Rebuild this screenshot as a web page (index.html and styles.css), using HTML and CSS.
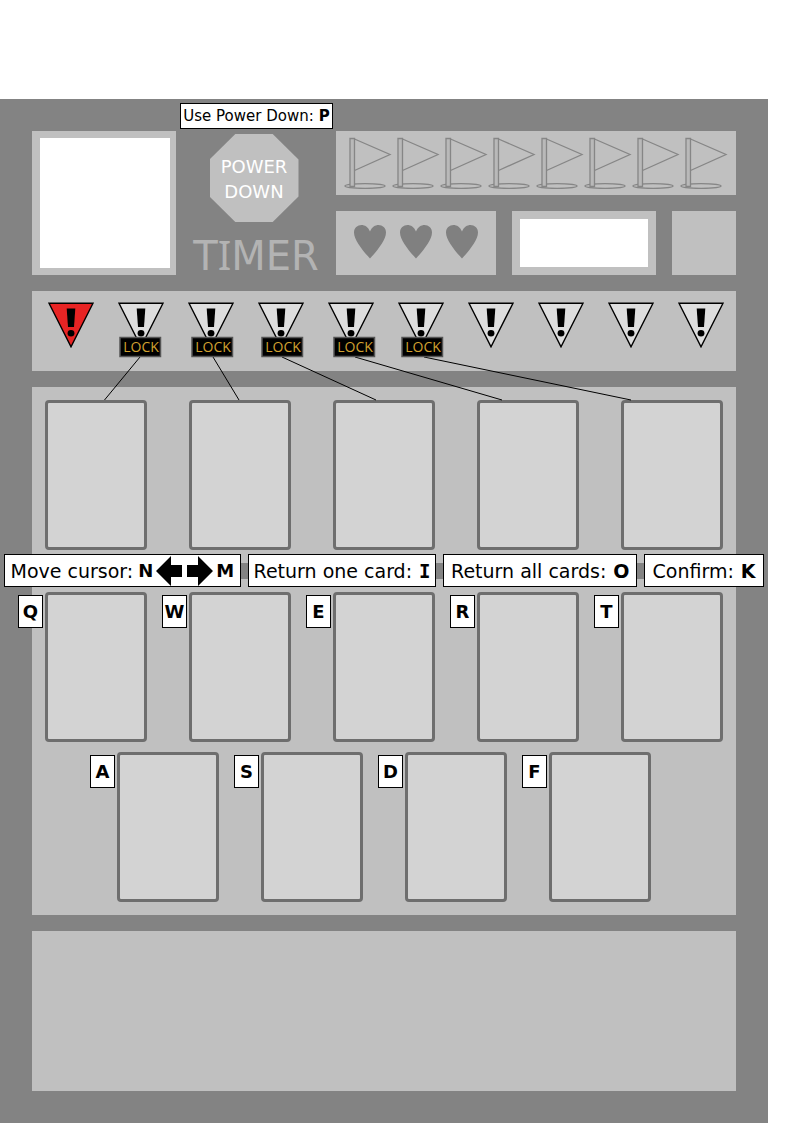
FILE: index.html
```html
<!DOCTYPE html>
<html lang="en">
<head>
<meta charset="utf-8">
<meta name="viewport" content="width=device-width, initial-scale=1">
<title>Program board</title>
<link rel="stylesheet" href="styles.css">
</head>
<body>
<svg class="defs" width="0" height="0" aria-hidden="true">
  <symbol id="flag" viewBox="0 0 48 56">
    <ellipse cx="21" cy="51" rx="20" ry="2.4"/>
    <path class="solid" d="M6 3.500H10.500V51.500H6Z"/>
    <path d="M10.500 4L46 19.500L10.500 35.500"/>
  </symbol>
  <symbol id="heart" viewBox="0 0 32 34">
    <path d="M16 33.500C9 26 0 15 0 7.500C0 -1 12 -3.500 16 6.500C20 -3.500 32 -1 32 7.500C32 15 23 26 16 33.500Z"/>
  </symbol>
  <symbol id="warn" viewBox="0 0 46 46">
    <path class="tri" d="M1 1.200H45L23 44.800Z"/>
    <path d="M18.700 6.500H27.300L26 25H20Z"/>
    <ellipse cx="23" cy="31.200" rx="3.400" ry="3.200"/>
  </symbol>
</svg>
<main class="board">
  <header class="top">
    <div class="panel portrait"><div class="blank"></div></div>
    <div class="power">
      <button class="tag power-tag">Use Power Down: <b>P</b></button>
      <div class="octagon">POWER<br>DOWN</div>
      <div class="timer">T<span class="slab">I</span>MER</div>
    </div>
    <div class="status">
      <div class="panel flags">
        <svg><use href="#flag"/></svg><svg><use href="#flag"/></svg><svg><use href="#flag"/></svg><svg><use href="#flag"/></svg><svg><use href="#flag"/></svg><svg><use href="#flag"/></svg><svg><use href="#flag"/></svg><svg><use href="#flag"/></svg>
      </div>
      <div class="counters">
        <div class="panel lives">
          <svg><use href="#heart"/></svg><svg><use href="#heart"/></svg><svg><use href="#heart"/></svg>
        </div>
        <div class="panel name"><div class="blank"></div></div>
        <div class="panel"></div>
      </div>
    </div>
  </header>

  <section class="panel damage">
    <svg class="hit"><use href="#warn"/></svg><svg><use href="#warn"/></svg><svg><use href="#warn"/></svg><svg><use href="#warn"/></svg><svg><use href="#warn"/></svg><svg><use href="#warn"/></svg><svg><use href="#warn"/></svg><svg><use href="#warn"/></svg><svg><use href="#warn"/></svg><svg><use href="#warn"/></svg>
    <svg class="locks" viewBox="0 0 704 112">
      <path class="wire" d="M108 66L72.500 109M181 66L207 109M250 66L344 109M323 66L470 109M392 66L599 109"/>
      <g class="badge">
        <rect x="88" y="46.500" width="40.500" height="19"/>
        <rect x="160" y="46.500" width="40.500" height="19"/>
        <rect x="230" y="46.500" width="40.500" height="19"/>
        <rect x="302" y="46.500" width="40.500" height="19"/>
        <rect x="370" y="46.500" width="40.500" height="19"/>
      </g>
      <g class="word">
        <text x="109" y="61">LOCK</text>
        <text x="181" y="61">LOCK</text>
        <text x="251" y="61">LOCK</text>
        <text x="323" y="61">LOCK</text>
        <text x="391" y="61">LOCK</text>
      </g>
    </svg>
  </section>

  <section class="panel program">
    <div class="row">
      <div class="card"></div><div class="card"></div><div class="card"></div><div class="card"></div><div class="card"></div>
    </div>
    <div class="band">
      <div class="commands">
        <div class="tag cursor">
          <span>Move cursor:</span>
          <button class="plain">N<svg viewBox="0 0 26 30"><path d="M0 15L15 0V9H26V21H15V30Z"/></svg></button>
          <button class="plain"><svg viewBox="0 0 26 30"><path d="M26 15L11 0V9H0V21H11V30Z"/></svg>M</button>
        </div>
        <button class="tag">Return one card: <b class="slab-bold">I</b></button>
        <button class="tag">Return all cards: <b>O</b></button>
        <button class="tag">Confirm: <b>K</b></button>
      </div>
    </div>
    <div class="row">
      <div class="card"><button class="tag key">Q</button></div>
      <div class="card"><button class="tag key">W</button></div>
      <div class="card"><button class="tag key">E</button></div>
      <div class="card"><button class="tag key">R</button></div>
      <div class="card"><button class="tag key">T</button></div>
    </div>
    <div class="row lower">
      <div class="card"><button class="tag key">A</button></div>
      <div class="card"><button class="tag key">S</button></div>
      <div class="card"><button class="tag key">D</button></div>
      <div class="card"><button class="tag key">F</button></div>
    </div>
  </section>

  <section class="panel tray"></section>
</main>
</body>
</html>
```
FILE: styles.css
```css
* { box-sizing: border-box; }
body {
  margin: 0;
  background: #fff;
  color: #000;
  font: 19px/24px Verdana, "DejaVu Sans", sans-serif;
}
svg { display: block; }
.defs { position: absolute; }
.board {
  display: flex;
  flex-direction: column;
  gap: 16px;
  margin: 99px 26px 0 0;
  padding: 32px;
  background: #838383;
}
.panel { background: #c0c0c0; }
.blank { height: 100%; background: #fff; }
.slab { font-family: "Noto Sans", sans-serif; }
.slab-bold { font-family: "DejaVu Sans Mono", monospace; }

.tag {
  display: flex;
  align-items: center;
  justify-content: center;
  padding: 0;
  gap: 7px;
  border: 1px solid #000;
  background: #fff;
  color: #000;
  font: inherit;
  white-space: nowrap;
}

.top {
  display: grid;
  grid-template-columns: 144px 128px 1fr;
  grid-template-rows: 144px;
  gap: 16px;
}
.portrait { padding: 7px 6px 7px 8px; }
.power {
  position: relative;
  display: flex;
  flex-direction: column;
  align-items: center;
  padding-top: 3px;
}
.power-tag {
  position: absolute;
  left: -12px;
  top: -28px;
  width: 153px;
  height: 26px;
  gap: 5px;
  font-size: 15px;
}
.octagon {
  flex: none;
  width: 89px;
  height: 88px;
  margin-right: 4px;
  padding-top: 20px;
  clip-path: polygon(29% 0, 71% 0, 100% 29%, 100% 71%, 71% 100%, 29% 100%, 0 71%, 0 29%);
  background: #c0c0c0;
  color: #fff;
  font-size: 18px;
  line-height: 25px;
  text-align: center;
}
.timer {
  margin-top: 13px;
  color: #b3b3b3;
  font-size: 40px;
  line-height: 40px;
}
.status { display: grid; gap: 16px; grid-template-rows: 64px 64px; }
.flags { display: flex; justify-content: space-between; padding: 4px 8px; }
.flags svg {
  width: 48px;
  height: 56px;
  fill: none;
  stroke: #868686;
  stroke-width: 1.3;
}
.solid { fill: #b9b9b9; }
.counters { display: grid; grid-template-columns: 1fr 144px 64px; gap: 16px; }
.lives {
  display: flex;
  align-items: center;
  justify-content: center;
  gap: 14px;
  padding: 0 12px 2px;
}
.lives svg { width: 32px; height: 34px; fill: #808080; }
.name { padding: 8px; }

.damage {
  position: relative;
  display: grid;
  grid-template-columns: repeat(10, 1fr);
  justify-items: center;
  height: 80px;
  padding: 11px 0 0 4px;
}
.damage > svg { width: 46px; height: 46px; }
.hit { --tri: #e82424; }
.tri { fill: var(--tri, #dedede); stroke: #000; stroke-width: 1.4; }
.damage .locks {
  position: absolute;
  left: 0;
  top: 0;
  z-index: 1;
  width: 100%;
  height: auto;
}
.wire { fill: none; stroke: #000; }
.badge { fill: #000; stroke: #555; stroke-width: 1.5; }
.word {
  fill: #d0a030;
  font: 14px "Open Sans", sans-serif;
  text-anchor: middle;
}

.program { padding: 13px; }
.row { display: flex; justify-content: space-between; }
.lower { margin-top: 10px; padding: 0 72px; }
.card {
  position: relative;
  width: 102px;
  height: 150px;
  border: 3px solid #6e6e6e;
  border-radius: 4px;
  background: #d3d3d3;
}
.key {
  position: absolute;
  left: -30px;
  top: 0;
  width: 25px;
  height: 33px;
  font-size: 18px;
  font-weight: bold;
}
.band {
  margin: 0 -13px;
  padding: 4px 0 5px;
  background: linear-gradient(#838383, #838383) 0 13px / 100% 16px no-repeat;
}
.commands {
  display: grid;
  grid-template-columns: 237fr 189fr 194fr 120fr;
  gap: 7px;
  height: 33px;
  margin: 0 -28px;
}
.cursor { gap: 5px; }
.plain {
  display: flex;
  align-items: center;
  gap: 3px;
  padding: 0;
  border: 0;
  background: none;
  color: #000;
  font: inherit;
  font-size: 18px;
  font-weight: bold;
}
.plain svg { width: 26px; height: 30px; }
.tray { height: 160px; }
```
